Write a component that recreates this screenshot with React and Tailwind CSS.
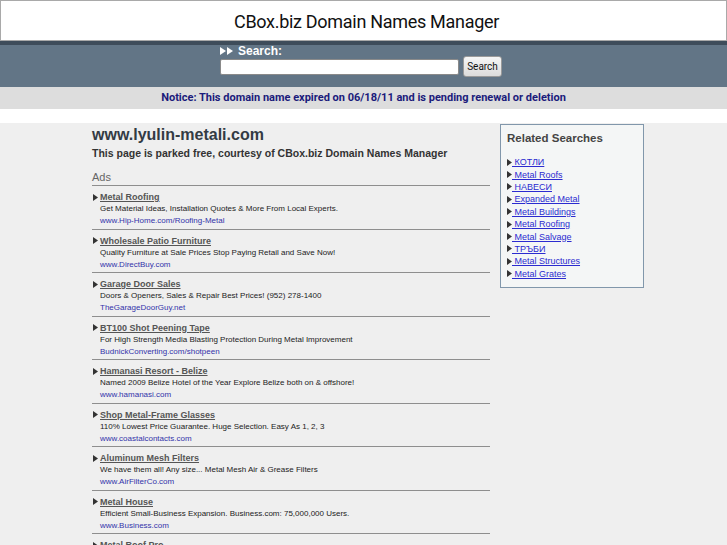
import React from "react";

const ads = [
  ["Metal Roofing", "Get Material Ideas, Installation Quotes & More From Local Experts.", "www.Hip-Home.com/Roofing-Metal"],
  ["Wholesale Patio Furniture", "Quality Furniture at Sale Prices Stop Paying Retail and Save Now!", "www.DirectBuy.com"],
  ["Garage Door Sales", "Doors & Openers, Sales & Repair Best Prices! (952) 278-1400", "TheGarageDoorGuy.net"],
  ["BT100 Shot Peening Tape", "For High Strength Media Blasting Protection During Metal Improvement", "BudnickConverting.com/shotpeen"],
  ["Hamanasi Resort - Belize", "Named 2009 Belize Hotel of the Year Explore Belize both on & offshore!", "www.hamanasi.com"],
  ["Shop Metal-Frame Glasses", "110% Lowest Price Guarantee. Huge Selection. Easy As 1, 2, 3", "www.coastalcontacts.com"],
  ["Aluminum Mesh Filters", "We have them all! Any size... Metal Mesh Air & Grease Filters", "www.AirFilterCo.com"],
  ["Metal House", "Efficient Small-Business Expansion. Business.com: 75,000,000 Users.", "www.Business.com"],
  ["Metal Roof Pro", "Find Metal Roofing Contractors Near You. Free Estimates.", "www.MetalRoofPro.com"],
];

const related = [
  "КОТЛИ",
  "Metal Roofs",
  "НАВЕСИ",
  "Expanded Metal",
  "Metal Buildings",
  "Metal Roofing",
  "Metal Salvage",
  "ТРЪБИ",
  "Metal Structures",
  "Metal Grates",
];

function Tri({ className = "", color = "#333", w = 5, h = 7 }) {
  return (
    <svg width={w} height={h} viewBox={`0 0 ${w} ${h}`} className={className}>
      <polygon points={`0,0 ${w},${h / 2} 0,${h}`} fill={color} />
    </svg>
  );
}

export default function App() {
  return (
    <div className="w-[727px] h-[545px] overflow-hidden bg-[#efefef] font-['Liberation_Sans',Arial,sans-serif]">
      {/* header */}
      <div className="h-[41px] bg-white border border-[#a9a9a9] flex items-center justify-center">
        <span className="text-[18px] text-[#111] font-['Roboto',sans-serif] tracking-[-0.3px] pt-[1px] pl-[6px]">
          CBox.biz Domain Names Manager
        </span>
      </div>
      <div className="h-[4px] bg-[#3e4c5a]" />
      <div className="h-[42px] bg-[#627586] pl-[220px]">
        <div className="flex items-center gap-[1px] h-[11px] text-white text-[12px] font-bold leading-none">
          <Tri color="#fff" w={6} h={8} />
          <Tri color="#fff" w={6} h={8} />
          <span className="ml-[4px]">Search:</span>
        </div>
        <div className="flex items-center gap-[4px]">
          <div className="w-[239px] h-[16px] bg-white rounded-[2px] border border-[#8a8a8a] mt-[1px]" />
          <div className="w-[39px] h-[21px] rounded-[3px] border border-[#9a9a9a] bg-gradient-to-b from-[#f6f6f6] to-[#dcdcdc] flex items-center justify-center text-[10px] text-[#111] font-['Roboto',sans-serif]">
            Search
          </div>
        </div>
      </div>
      {/* notice */}
      <div className="h-[22px] bg-[#dddddd] flex items-center justify-center">
        <span className="text-[11px] font-bold text-[#1b1b7b] font-['Roboto',sans-serif]">
          Notice: This domain name expired on 06/18/11 and is pending renewal or deletion
        </span>
      </div>
      <div className="h-[14px] bg-white" />
      {/* content */}
      <div className="flex pl-[92px] gap-[10px]">
        <div className="w-[398px] pt-[2px]">
          <div className="h-[20px] leading-[20px] text-[16px] font-bold text-[#333b44]">www.lyulin-metali.com</div>
          <div className="h-[14px] leading-[14px] mt-[1px] text-[10.5px] font-bold text-[#333]">
            This page is parked free, courtesy of CBox.biz Domain Names Manager
          </div>
          <div className="h-[14px] leading-[14px] mt-[10px] text-[11px] text-[#666]">Ads</div>
          <div className="border-b border-[#8e8e8e] mt-[1px]" />
          {ads.map(([t, d, u], i) => (
            <div key={i} className="pt-[5px] pb-[1.5px] border-b border-[#8e8e8e]">
              <div className="h-[12px] flex items-center">
                <Tri className="ml-[1px] mr-[2px]" />
                <span className="text-[9px] font-bold text-[#555] underline leading-[12px]">{t}</span>
              </div>
              <div className="h-[12px] leading-[12px] pl-[8px] text-[8px] text-[#222]">{d}</div>
              <div className="h-[12px] leading-[12px] pl-[8px] text-[8px] text-[#3333aa]">{u}</div>
            </div>
          ))}
        </div>
        <div className="w-[144px] h-[164px] mt-[1px] border border-[#8197ab] bg-[#f4f6f6] pl-[6px] pt-[6px]">
          <div className="h-[15px] leading-[15px] text-[11.5px] font-bold text-[#444]">Related Searches</div>
          <div className="mt-[10px]">
            {related.map((r, i) => (
              <div key={i} className="h-[12.4px] flex items-center">
                <Tri />
                <span className="text-[9px] text-[#2b2bd0] underline leading-[12px] whitespace-pre">{" " + r}</span>
              </div>
            ))}
          </div>
        </div>
      </div>
    </div>
  );
}
